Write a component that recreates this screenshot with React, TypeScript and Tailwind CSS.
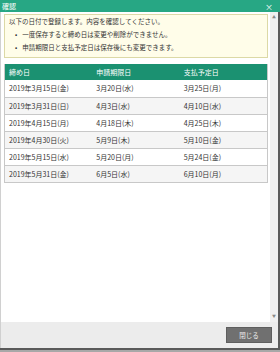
const rows = [
  { close: "2019年3月15日(金)", limit: "3月20日(水)", pay: "3月25日(月)" },
  { close: "2019年3月31日(日)", limit: "4月3日(水)", pay: "4月10日(水)" },
  { close: "2019年4月15日(月)", limit: "4月18日(木)", pay: "4月25日(木)" },
  { close: "2019年4月30日(火)", limit: "5月9日(木)", pay: "5月10日(金)" },
  { close: "2019年5月15日(水)", limit: "5月20日(月)", pay: "5月24日(金)" },
  { close: "2019年5月31日(金)", limit: "6月5日(水)", pay: "6月10日(月)" },
];

export default function App() {
  return (
    <div
      className="flex h-[352px] w-[280px] flex-col bg-white text-[6.5px] leading-[7px] text-[#333]"
      style={{ fontFamily: '"Noto Sans CJK JP", "Noto Sans", sans-serif' }}
    >
      <div className="flex h-[12px] shrink-0 items-center justify-between bg-[#27a784] pl-[2px] pr-[7px] text-[7px] text-white">
        <span>確認</span>
        <span className="text-[8px]">×</span>
      </div>
      <div className="flex min-h-0 flex-1 border-r-2 border-[#5a5a5a]">
        <div className="flex-1 border-l border-[#d0d0d0] pl-[3px] pr-[2px] pt-[2px]">
          <div className="flex flex-col gap-[6px] border border-[#dcd9a6] bg-[#fffde9] px-[4px] pb-[6px] pt-[3px]">
            <div>以下の日付で登録します。内容を確認してください。</div>
            <ul className="flex flex-col gap-[6px] pl-[6px]">
              <li className="flex gap-[5px]">
                <span>•</span>
                <span>一度保存すると締め日は変更や削除ができません。</span>
              </li>
              <li className="flex gap-[5px]">
                <span>•</span>
                <span>申請期限日と支払予定日は保存後にも変更できます。</span>
              </li>
            </ul>
          </div>
          <div className="mt-[6px] border-x border-b border-[#c8c8c8] text-[7px]">
            <div className="grid h-[16px] grid-cols-3 items-center bg-[#1b9171] text-white">
              <div className="pl-[4px]">締め日</div>
              <div className="pl-[4px]">申請期限日</div>
              <div className="pl-[4px]">支払予定日</div>
            </div>
            {rows.map((r, i) => (
              <div
                key={r.close}
                className={`grid h-[17px] grid-cols-3 items-center ${
                  i > 0 ? "border-t border-[#c8c8c8]" : ""
                } ${i % 2 === 1 ? "bg-[#f5f5f5]" : "bg-white"}`}
              >
                <div className="pl-[4px]">{r.close}</div>
                <div className="pl-[4px]">{r.limit}</div>
                <div className="pl-[4px]">{r.pay}</div>
              </div>
            ))}
          </div>
        </div>
        <div className="flex w-[8px] flex-col items-center justify-between bg-[#f0f0f0] py-[2px] text-[4px] text-[#888]">
          <span>▲</span>
          <span>▼</span>
        </div>
      </div>
      <div className="flex h-[26px] shrink-0 items-center justify-end border-l border-r-2 border-[#5a5a5a] border-l-[#d0d0d0] bg-[#ececec] pr-[6px]">
        <button className="h-[16px] w-[46px] border border-[#5e5e5e] bg-[#707070] text-[6.5px] text-[#eee]">
          閉じる
        </button>
      </div>
      <div className="h-[4px] shrink-0 border-t-2 border-[#5a5a5a] bg-[#a8a8a8]" />
    </div>
  );
}
